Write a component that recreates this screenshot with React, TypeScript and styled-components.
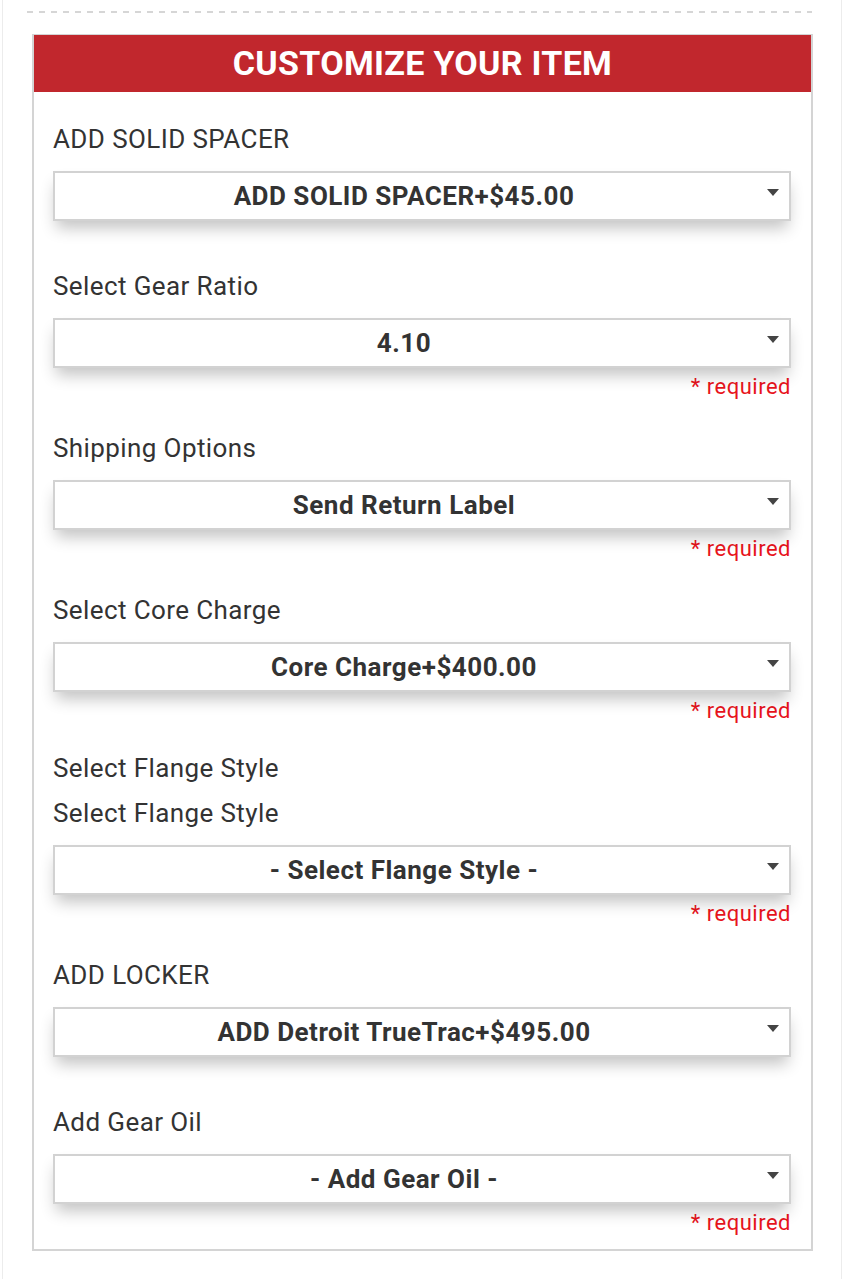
import React from "react";
import styled, { createGlobalStyle } from "styled-components";

const Global = createGlobalStyle`
  html, body { margin: 0; padding: 0; background: #ffffff; }
  body { font-family: Roboto, "Liberation Sans", Arial, sans-serif; color: #333; }
  * { box-sizing: border-box; }
`;

const Page = styled.div`
  margin: 0 2px;
  min-height: 1279px;
  border-left: 1px solid #ececec;
  border-right: 1px solid #ececec;
  padding: 11px 29px 0 29px;
`;

const Divider = styled.div`
  height: 2px;
  margin: 0 0 21px -5px;
  background-image: linear-gradient(to right, #d6d6d6 0 6px, transparent 6px 12px);
  background-size: 12px 2px;
  background-repeat: repeat-x;
`;

const Panel = styled.section`
  width: 781px;
  border: 2px solid #d4d4d4;
  border-top-width: 1px;
  background: #fff;
`;

const Header = styled.h2`
  margin: 0;
  height: 57px;
  background: #c1272d;
  color: #fff;
  font-family: Roboto, "Liberation Sans", Arial, sans-serif;
  font-weight: 700;
  font-size: 34px;
  line-height: 57px;
  text-align: center;
  letter-spacing: 0.3px;
`;

const Body = styled.div`
  display: flex;
  flex-direction: column;
  gap: 43px;
  padding: 25px 20px 30px 19px;
`;

const Group = styled.div<{ $tight?: boolean }>`
  display: flex;
  flex-direction: column;
  margin-top: ${(p) => (p.$tight ? "-4px" : "0")};
`;

const Label = styled.div`
  font-size: 26px;
  line-height: 45px;
  letter-spacing: 0.4px;
  color: #333;
`;

const SelectBox = styled.div`
  position: relative;
  margin-top: 9px;
  height: 50px;
  border: 2px solid #d2d2d2;
  background: #fff;
  box-shadow: 0 10px 16px -3px rgba(0, 0, 0, 0.24);
  display: flex;
  align-items: center;
  justify-content: center;
  font-size: 26px;
  font-weight: 700;
  letter-spacing: 0.5px;
  color: #333;
  padding: 0 36px 0 0;
`;

const Arrow = styled.span`
  position: absolute;
  right: 10px;
  top: 16px;
  width: 0;
  height: 0;
  border-left: 6px solid transparent;
  border-right: 6px solid transparent;
  border-top: 7px solid #444;
`;

const Required = styled.div`
  margin-top: 8px;
  margin-bottom: -15px;
  line-height: 22px;
  font-size: 22px;
  letter-spacing: 0.5px;
  color: #e8141c;
  text-align: right;
`;

type Field = { labels: string[]; value: string; required?: boolean };

const fields: Field[] = [
  { labels: ["ADD SOLID SPACER"], value: "ADD SOLID SPACER+$45.00" },
  { labels: ["Select Gear Ratio"], value: "4.10", required: true },
  { labels: ["Shipping Options"], value: "Send Return Label", required: true },
  { labels: ["Select Core Charge"], value: "Core Charge+$400.00", required: true },
  {
    labels: ["Select Flange Style", "Select Flange Style"],
    value: "- Select Flange Style -",
    required: true,
  },
  { labels: ["ADD LOCKER"], value: "ADD Detroit TrueTrac+$495.00" },
  { labels: ["Add Gear Oil"], value: "- Add Gear Oil -", required: true },
];

export default function App() {
  return (
    <>
      <Global />
      <Page>
        <Divider />
        <Panel>
          <Header>CUSTOMIZE YOUR ITEM</Header>
          <Body>
            {fields.map((f, i) => (
              <Group key={i} $tight={f.labels.length > 1}>
                {f.labels.map((l, j) => (
                  <Label key={j}>{l}</Label>
                ))}
                <SelectBox>
                  {f.value}
                  <Arrow />
                </SelectBox>
                {f.required && <Required>* required</Required>}
              </Group>
            ))}
          </Body>
        </Panel>
      </Page>
    </>
  );
}
